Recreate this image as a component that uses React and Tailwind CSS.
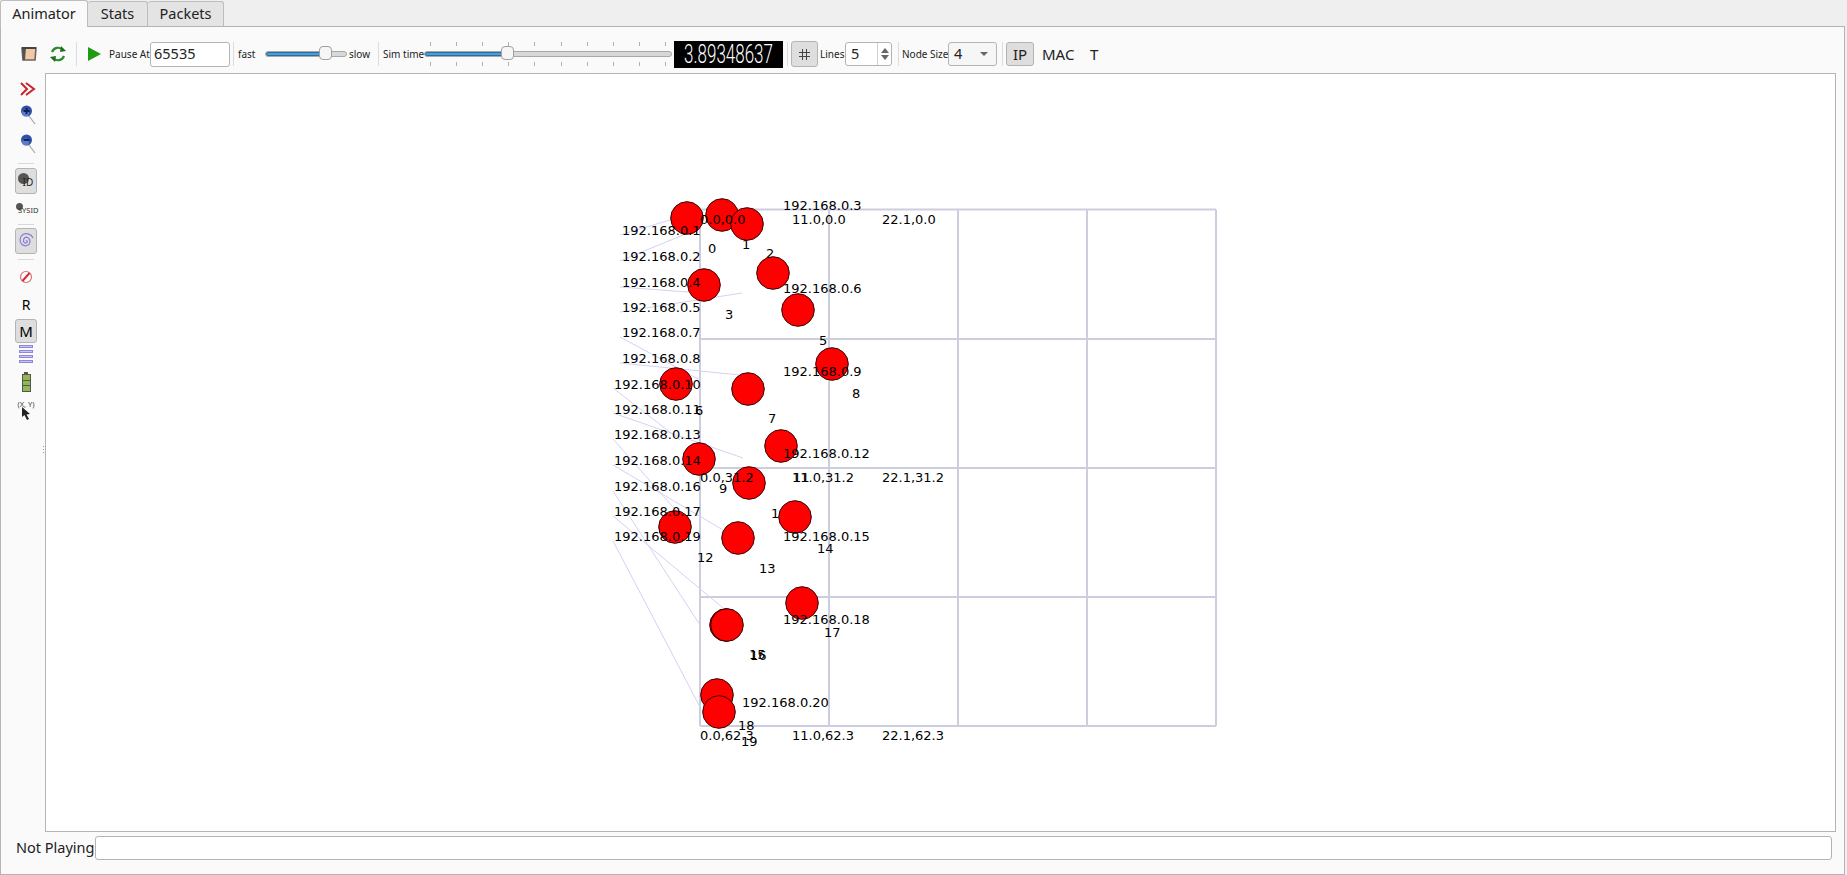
const grid = { xs: [700, 829, 958, 1087, 1216], ys: [209.5, 339, 468, 597, 726] };

const links = [
  [620, 235, 703, 210],
  [620, 261, 683, 235],
  [620, 287, 688, 292],
  [620, 312, 742, 293],
  [620, 337, 700, 380],
  [620, 363, 740, 375],
  [613, 388, 680, 440],
  [613, 413, 743, 458],
  [613, 439, 680, 515],
  [613, 465, 740, 540],
  [613, 491, 700, 625],
  [613, 516, 723, 608],
  [613, 541, 700, 707],
];

const nodes = [
  [687, 218], [722, 215], [747, 224], [773, 273], [704, 285], [798, 310], [832, 364],
  [676, 384], [748, 389], [781, 446], [699, 459], [749, 483], [795, 517], [675, 527],
  [738, 538], [802, 603], [726, 625], [727, 625], [717, 695], [719, 712],
];

const ids = [
  ["0", 708, 253], ["1", 742, 249], ["2", 766, 258], ["3", 725, 319], ["5", 819, 345],
  ["6", 695, 415], ["7", 768, 423], ["8", 852, 398], ["9", 719, 493], ["10", 771, 518],
  ["11", 793, 482], ["12", 697, 562], ["13", 759, 573], ["14", 817, 553], ["15", 749, 659],
  ["16", 750, 660], ["17", 824, 637], ["18", 738, 730], ["19", 741, 746],
];

const labels = [
  ["192.168.0.1", 622, 235], ["192.168.0.2", 622, 261], ["192.168.0.4", 622, 287],
  ["192.168.0.5", 622, 312], ["192.168.0.7", 622, 337], ["192.168.0.8", 622, 363],
  ["192.168.0.10", 614, 389], ["192.168.0.11", 614, 414], ["192.168.0.13", 614, 439],
  ["192.168.0.14", 614, 465], ["192.168.0.16", 614, 491], ["192.168.0.17", 614, 516],
  ["192.168.0.19", 614, 541], ["192.168.0.3", 783, 210], ["192.168.0.6", 783, 293],
  ["192.168.0.9", 783, 376], ["192.168.0.12", 783, 458], ["192.168.0.15", 783, 541],
  ["192.168.0.18", 783, 624], ["192.168.0.20", 742, 707],
  ["0.0,0.0", 700, 224], ["11.0,0.0", 792, 224], ["22.1,0.0", 882, 224],
  ["0.0,31.2", 700, 482], ["11.0,31.2", 792, 482], ["22.1,31.2", 882, 482],
  ["0.0,62.3", 700, 740], ["11.0,62.3", 792, 740], ["22.1,62.3", 882, 740],
];

const ticks = [0, 1, 2, 3, 4, 5, 6, 7, 8, 9];

function Sep() {
  return <div className="mx-[3px] h-[24px] w-px shrink-0 bg-[#dcdcdc]" />;
}

function SideSep() {
  return <div className="my-[3px] h-px w-[16px] bg-[#d8d8d8]" />;
}

function Slider({ width, pos }) {
  return (
    <div className="relative h-[6px] shrink-0 rounded-full border border-[#a8a8a8] bg-[#d8d8d8]" style={{ width }}>
      <div className="h-full rounded-full border border-[#2a6f9e] bg-[#4a9fd8]" style={{ width: pos }} />
      <div
        className="absolute top-[-6px] h-[14px] w-[13px] rounded-[4px] border border-[#a0a0a0] bg-[#f6f6f6]"
        style={{ left: pos - 4 }}
      />
    </div>
  );
}

function Magnifier({ minus }) {
  return (
    <svg width="18" height="24" viewBox="0 0 18 24">
      <path d="M10 13 L16 21" stroke="#a8a8a8" strokeWidth="1.2" />
      <circle cx="7.5" cy="8" r="5.5" fill="#2f4fa8" />
      <circle cx="6.5" cy="10" r="3.5" fill="#6f8ed8" opacity="0.7" />
      <path d={minus ? "M4.5 8 H10.5" : "M4.5 8 H10.5 M7.5 5 V11"} stroke="#10204f" strokeWidth="1.8" />
    </svg>
  );
}

function Sidebar() {
  return (
    <div className="flex w-[44px] shrink-0 flex-col items-center pl-[6px] pt-[9px] font-['Noto_Sans',sans-serif]">
      <svg width="16" height="14" viewBox="0 0 16 14" className="mb-[7px] ml-[3px]">
        <path d="M1 1 L7 7 L1 13 M6 1 L14 7 L6 13" fill="none" stroke="#c8232c" strokeWidth="2" />
      </svg>
      <div className="ml-[3px] flex flex-col gap-[5px]">
        <Magnifier />
        <Magnifier minus />
      </div>
      <div className="mt-[4px]">
        <SideSep />
      </div>
      <div className="mt-[1px] flex h-[26px] w-[22px] items-end justify-center rounded-[3px] border border-[#b4b4b4] bg-[#dedede] pb-[4px]">
        <div className="relative h-[16px] w-[17px]">
          <div className="absolute left-0 top-0 h-[11px] w-[11px] rounded-full bg-[#555]" />
          <span className="absolute left-[5px] top-[3px] text-[10px] leading-[13px] text-[#222]">ID</span>
        </div>
      </div>
      <div className="relative mt-[9px] h-[12px] w-[22px]">
        <div className="absolute left-[1px] top-0 h-[7px] w-[7px] rounded-full bg-[#555]" />
        <span className="absolute left-[3px] top-[2px] text-[7.5px] leading-[10px] text-[#333]">SYSID</span>
      </div>
      <div className="mt-[6px]">
        <SideSep />
      </div>
      <div className="flex h-[26px] w-[22px] items-center justify-center rounded-[3px] border border-[#b4b4b4] bg-[#dedede]">
        <svg width="16" height="18" viewBox="0 0 16 18">
          <path
            d="M8 9 C9.5 8 10 10.5 8 11 C5.5 11.5 4.5 8 6.5 6 C9 4 12.5 6.5 12 10 C11.5 13.5 7 15 4 12.5 C1 10 1.5 4.5 5 2.5 C8.5 0.8 13.5 2 15 6"
            fill="none"
            stroke="#8a7ad8"
            strokeWidth="1.2"
          />
        </svg>
      </div>
      <div className="mt-[2px]">
        <SideSep />
      </div>
      <svg width="14" height="14" viewBox="0 0 14 14" className="mt-[7px]">
        <circle cx="7" cy="7" r="5.5" fill="#fff" stroke="#d87078" strokeWidth="1.2" />
        <path d="M3.5 11 L10.5 3" stroke="#d0303a" strokeWidth="2" />
      </svg>
      <span className="mt-[12px] text-[14px] leading-[18px] text-black">R</span>
      <div className="mt-[5px] flex h-[24px] w-[22px] items-center justify-center rounded-[3px] border border-[#b4b4b4] bg-[#dedede] text-[15px] text-black">
        M
      </div>
      <div className="mt-[2px] flex flex-col gap-[2px]">
        {[0, 1, 2, 3].map((i) => (
          <div key={i} className="h-[3px] w-[14px] border border-[#8f86e0] bg-[#c8c4f4]" />
        ))}
      </div>
      <div className="mt-[9px] flex flex-col items-center">
        <div className="h-[2px] w-[4px] bg-[#555]" />
        <div className="flex h-[18px] w-[9px] flex-col gap-px border border-[#555] bg-[#555]">
          {[0, 1, 2].map((i) => (
            <div key={i} className="flex-1 bg-[#93b851]" />
          ))}
        </div>
      </div>
      <span className="mt-[8px] text-[7.5px] leading-[8px] text-[#444]">(X, Y)</span>
      <svg width="10" height="14" viewBox="0 0 10 14" className="mt-[-1px]">
        <path d="M1 0 L1 10 L3.5 8 L6 13 L8 12 L5.5 7.5 L9 7 Z" fill="#222" />
      </svg>
    </div>
  );
}

function Scene() {
  return (
    <svg viewBox="46 74 1789 757" className="block h-full w-full" fontFamily="'DejaVu Sans', sans-serif" fontSize="13">
      {grid.xs.map((x) => (
        <line key={x} x1={x} x2={x} y1={grid.ys[0]} y2={grid.ys[4]} stroke="#cdcde0" strokeWidth="2" />
      ))}
      {grid.ys.map((y) => (
        <line key={y} x1={grid.xs[0]} x2={grid.xs[4]} y1={y} y2={y} stroke="#cdcde0" strokeWidth="2" />
      ))}
      {links.map((l, i) => (
        <line key={i} x1={l[0]} y1={l[1]} x2={l[2]} y2={l[3]} stroke="#d2d2f4" strokeWidth="1" />
      ))}
      {ids.map(([t, x, y]) => (
        <text key={t} x={x} y={y} fill="#000">{t}</text>
      ))}
      {nodes.map(([x, y], i) => (
        <circle key={i} cx={x} cy={y} r="16.3" fill="#ff0000" stroke="#300" strokeWidth="1" />
      ))}
      {labels.map(([t, x, y]) => (
        <text key={t} x={x} y={y} fill="#000">{t}</text>
      ))}
    </svg>
  );
}

export default function App() {
  return (
    <div className="flex h-[875px] w-[1847px] flex-col overflow-hidden bg-[#efefef] font-['Noto_Sans',sans-serif] text-[#222]">
      {/* Tabs */}
      <div className="relative z-10 flex h-[26px] shrink-0 items-end">
        <div className="flex h-[27px] w-[88px] translate-y-px items-center justify-center rounded-t-[3px] border-x border-t border-[#bdbdbd] bg-[#fafafa] text-[14.5px]">
          Animator
        </div>
        <div className="flex h-[25px] w-[60px] items-center justify-center rounded-t-[3px] border-t border-r border-[#bdbdbd] bg-[#e4e4e4] text-[14.5px]">
          Stats
        </div>
        <div className="flex h-[25px] w-[76px] items-center justify-center rounded-t-[3px] border-t border-r border-[#bdbdbd] bg-[#e4e4e4] text-[14.5px]">
          Packets
        </div>
      </div>

      <div className="mr-[2px] flex min-h-0 flex-1 flex-col border border-[#b4b4b4] bg-[#fafafa]">
        {/* Toolbar */}
        <div className="flex h-[46px] shrink-0 items-center pl-[19px] pt-[8px]">
          <svg width="18" height="16" viewBox="0 0 18 16" className="shrink-0">
            <path d="M2 2 H16 L15 14 H3 Z" fill="#f3c9a5" stroke="#666" strokeWidth="1.6" />
            <path d="M2 2 H6 L5 14 H3 Z" fill="#555" />
            <path d="M2 2 H16" stroke="#444" strokeWidth="2" />
          </svg>
          <svg width="18" height="18" viewBox="0 0 18 18" className="ml-[11px] shrink-0">
            <path d="M3 7 A6.5 6.5 0 0 1 14 5" fill="none" stroke="#2e8b2e" strokeWidth="2.2" />
            <path d="M12 1 L17 6 L11 7 Z" fill="#1f6f1f" />
            <path d="M15 11 A6.5 6.5 0 0 1 4 13" fill="none" stroke="#2e8b2e" strokeWidth="2.2" />
            <path d="M6 17 L1 12 L7 11 Z" fill="#1f6f1f" />
          </svg>
          <div className="ml-[6px]">
            <Sep />
          </div>
          <svg width="15" height="14" viewBox="0 0 15 14" className="ml-[7px] shrink-0">
            <path d="M1 0 L14 7 L1 14 Z" fill="#1f9a12" />
          </svg>
          <span className="ml-[7px] w-[41px] shrink-0 whitespace-nowrap text-[10px]">Pause At</span>
          <div className="flex h-[25px] w-[80px] shrink-0 items-center rounded-[3px] border border-[#b4b4b4] bg-white pl-[3px] text-[14.5px]">
            65535
          </div>
          <Sep />
          <span className="ml-[1px] w-[27px] shrink-0 text-[10px]">fast</span>
          <Slider width={82} pos={57} />
          <span className="ml-[2px] w-[26px] shrink-0 text-[10px]">slow</span>
          <Sep />
          <span className="ml-[1px] w-[41px] shrink-0 whitespace-nowrap text-[10px]">Sim time</span>
          <div className="flex h-[24px] w-[248px] shrink-0 flex-col justify-between">
            <div className="flex justify-between px-[6px]">
              {ticks.map((t) => (
                <div key={t} className="h-[4px] w-px bg-[#b0b0b0]" />
              ))}
            </div>
            <Slider width={248} pos={80} />
            <div className="flex justify-between px-[6px]">
              {ticks.map((t) => (
                <div key={t} className="h-[4px] w-px bg-[#b0b0b0]" />
              ))}
            </div>
          </div>
          <div className="ml-[2px] flex h-[27px] w-[109px] shrink-0 items-center justify-center bg-black">
            <span className="scale-y-[1.5] whitespace-nowrap font-['Roboto',sans-serif] text-[17px] font-light leading-[18px] text-white">
              3.89348637
            </span>
          </div>
          <div className="ml-[1px]">
            <Sep />
          </div>
          <div className="flex h-[26px] w-[27px] shrink-0 items-center justify-center rounded-[3px] border border-[#b4b4b4] bg-[#dedede]">
            <svg width="11" height="11" viewBox="0 0 11 11">
              <path d="M3.5 0 V11 M7.5 0 V11 M0 3.5 H11 M0 7.5 H11" stroke="#444" strokeWidth="1" />
            </svg>
          </div>
          <span className="ml-[2px] w-[25px] shrink-0 text-[10px]">Lines</span>
          <div className="flex h-[24px] w-[47px] shrink-0 items-center justify-between rounded-[3px] border border-[#b4b4b4] bg-white pl-[5px] text-[14.5px]">
            5
            <div className="flex h-full w-[14px] flex-col items-center justify-center gap-[2px] border-l border-[#d0d0d0] text-[#666]">
              <div className="h-0 w-0 border-x-[4px] border-b-[5px] border-x-transparent border-b-[#666]" />
              <div className="h-0 w-0 border-x-[4px] border-t-[5px] border-x-transparent border-t-[#666]" />
            </div>
          </div>
          <div className="ml-[3px]">
            <Sep />
          </div>
          <span className="w-[46px] shrink-0 whitespace-nowrap text-[10px]">Node Size</span>
          <div className="flex h-[24px] w-[49px] shrink-0 items-center justify-between rounded-[3px] border border-[#b4b4b4] bg-[#f6f6f6] px-[5px] text-[14.5px]">
            4
            <div className="mr-[3px] h-0 w-0 border-x-[4px] border-t-[4px] border-x-transparent border-t-[#666]" />
          </div>
          <div className="ml-[2px]">
            <Sep />
          </div>
          <div className="flex h-[24px] w-[28px] shrink-0 items-center justify-center rounded-[3px] border border-[#b4b4b4] bg-[#dedede] text-[15px]">
            IP
          </div>
          <span className="ml-[8px] w-[32px] shrink-0 text-[15px]">MAC</span>
          <span className="ml-[16px] shrink-0 text-[15px]">T</span>
        </div>

        {/* Sidebar and canvas */}
        <div className="flex min-h-0 flex-1">
          <Sidebar />
          <div className="relative min-w-0 flex-1 mr-[8px] border border-[#b4b4b4] bg-white">
            <Scene />
            <div className="absolute left-[-3px] top-[372px] flex flex-col gap-[2px]">
              <div className="h-px w-px bg-[#999]" />
              <div className="h-px w-px bg-[#999]" />
              <div className="h-px w-px bg-[#999]" />
            </div>
          </div>
        </div>

        {/* Status */}
        <div className="flex h-[42px] shrink-0 items-center pb-[14px] pl-[15px] pr-[12px] pt-[3px]">
          <span className="w-[79px] shrink-0 whitespace-nowrap text-[14.5px]">Not Playing</span>
          <div className="h-[24px] flex-1 rounded-[3px] border border-[#b4b4b4] bg-white" />
        </div>
      </div>
    </div>
  );
}
